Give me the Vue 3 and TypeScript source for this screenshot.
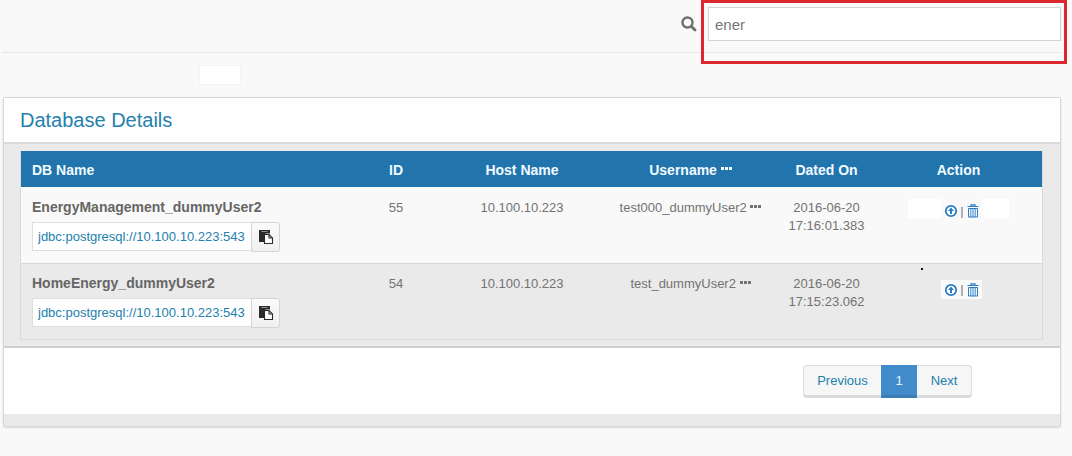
<script setup lang="ts">
import { ref } from 'vue'

interface Database {
  id: number
  name: string
  url: string
  host: string
  user: string
  date: string
  time: string
}

const query = ref('ener')

const databases: Database[] = [
  {
    id: 55,
    name: 'EnergyManagement_dummyUser2',
    url: 'jdbc:postgresql://10.100.10.223:543',
    host: '10.100.10.223',
    user: 'test000_dummyUser2',
    date: '2016-06-20',
    time: '17:16:01.383',
  },
  {
    id: 54,
    name: 'HomeEnergy_dummyUser2',
    url: 'jdbc:postgresql://10.100.10.223:543',
    host: '10.100.10.223',
    user: 'test_dummyUser2',
    date: '2016-06-20',
    time: '17:15:23.062',
  },
]
</script>

<template>
  <main class="page">
    <header class="topbar">
      <label class="search-label" for="search" aria-label="Search">
        <svg width="16" height="16" viewBox="0 0 16 16">
          <circle cx="6.5" cy="6.5" r="5" fill="none" stroke="#6f6f6f" stroke-width="2.4" />
          <path d="M10.2 10.2L14 14" stroke="#6f6f6f" stroke-width="2.8" stroke-linecap="round" />
        </svg>
      </label>
      <div class="search-field">
        <input id="search" v-model="query" type="text" class="search-input" />
      </div>
    </header>

    <div class="strip"><span class="blank"></span></div>

    <section class="panel">
      <h1 class="title">Database Details</h1>
      <div class="body">
        <table class="grid">
          <colgroup>
            <col />
            <col class="c-id" />
            <col class="c-host" />
            <col class="c-user" />
            <col class="c-date" />
            <col class="c-action" />
          </colgroup>
          <thead>
            <tr>
              <th class="left">DB Name</th>
              <th>ID</th>
              <th>Host Name</th>
              <th>
                Username
                <svg class="dots" width="12" height="11" viewBox="0 0 12 11" fill="currentColor">
                  <path d="M0 3h3v3H0zM4 3h3v3H4zM8 3h3v3H8z" />
                </svg>
              </th>
              <th>Dated On</th>
              <th>Action</th>
            </tr>
          </thead>
          <tbody>
            <tr v-for="db in databases" :key="db.id">
              <td class="left">
                <div class="name">{{ db.name }}</div>
                <div class="copy">
                  <input class="url" type="text" readonly :value="db.url" :aria-label="'URL of ' + db.name" />
                  <button class="copy-btn" type="button" aria-label="Copy URL">
                    <svg width="16" height="16" viewBox="0 0 16 16">
                      <path d="M1 1h11v3.5H7.5V13H1z" fill="#2b2b2b" />
                      <path d="M3.5 2.5h6" stroke="#8f8f8f" stroke-width="1" />
                      <path d="M6.5 5.5h4.5l3.5 3.5v5.5h-8z" fill="#fff" stroke="#2b2b2b" stroke-width="1.1" />
                      <path d="M11 5.5v3.5h3.5" fill="none" stroke="#2b2b2b" stroke-width="1.1" />
                    </svg>
                  </button>
                </div>
              </td>
              <td>{{ db.id }}</td>
              <td>{{ db.host }}</td>
              <td>
                {{ db.user }}
                <svg class="dots" width="12" height="10" viewBox="0 0 12 10" fill="currentColor">
                  <path d="M0 3h3v3H0zM4 3h3v3H4zM8 3h3v3H8z" />
                </svg>
              </td>
              <td>{{ db.date }}<br />{{ db.time }}</td>
              <td class="action-cell">
                <div class="actions">
                  <div class="tools">
                    <button class="icon-btn" type="button" aria-label="Upload">
                      <svg width="14" height="14" viewBox="0 0 14 14">
                        <circle cx="7" cy="7" r="5.2" fill="#fff" stroke="#2a7cc4" stroke-width="1.8" />
                        <path d="M7 3.6L10 7H8v3H6V7H4z" fill="#2a7cc4" />
                      </svg>
                    </button>
                    <span class="sep"></span>
                    <button class="icon-btn" type="button" aria-label="Delete">
                      <svg width="12" height="14" viewBox="0 0 12 14" fill="none" stroke="#2a7cc4">
                        <path d="M4 2V.8h4V2M.5 2.5h11" stroke-width="1.2" />
                        <path d="M1.5 4.5h9v8.5h-9z" />
                        <path d="M3.8 4.5V13M6 4.5V13M8.2 4.5V13" stroke-width=".9" />
                      </svg>
                    </button>
                  </div>
                </div>
              </td>
            </tr>
          </tbody>
        </table>
      </div>
      <footer class="footer">
        <nav class="pager" aria-label="Pages">
          <a href="#previous" class="previous">Previous</a>
          <a href="#1" class="current" aria-current="page">1</a>
          <a href="#next" class="next">Next</a>
        </nav>
      </footer>
    </section>
  </main>
</template>

<style>
body {
  background: #f9f9f9;
}
</style>

<style scoped>
.page {
  min-height: 100vh;
  box-sizing: border-box;
  background: #f9f9f9;
  font: 13px/18px "Liberation Sans", Arial, sans-serif;
  color: #737373;
}
.page * {
  box-sizing: border-box;
}
svg {
  display: block;
}
button {
  font: inherit;
  cursor: pointer;
}
.topbar {
  display: flex;
  justify-content: flex-end;
  margin: 0 11px 0 2px;
  padding-top: 7px;
  height: 53px;
  border-bottom: 1px solid #e8e8e8;
}
.search-label {
  margin: 9px 11px 0 0;
}
.search-field {
  position: relative;
  width: calc(100% / 3);
  min-width: 200px;
  height: 34px;
}
/* Highlight frame around the search field */
.search-field::after {
  content: "";
  position: absolute;
  inset: -7px -6px -23px -7px;
  border: 3px solid #dc2630;
  pointer-events: none;
}
.search-input {
  width: 100%;
  height: 34px;
  padding: 0 6px;
  border: 1px solid #d2d4d4;
  background: #fff;
  color: #777;
  font: 15px "Liberation Sans", Arial, sans-serif;
  outline: none;
}
.strip {
  height: 44px;
  padding: 12px 0 0 199px;
}
.blank {
  display: block;
  width: 42px;
  height: 20px;
  background: #fff;
  border: 1px solid #f4f4f4;
}
.panel {
  margin: 0 11px 0 3px;
  padding-bottom: 12px;
  background: #eaeaea;
  border: 1px solid #d6d6d6;
  border-radius: 2px;
  box-shadow: 0 1px 2px rgba(0, 0, 0, 0.12);
}
.title {
  margin: 0;
  padding: 0 16px;
  background: #fff;
  border-bottom: 2px solid #dadada;
  color: #2381ae;
  font-size: 20px;
  font-weight: 400;
  line-height: 44px;
}
.body {
  padding: 7px 17px 6px 16px;
}
.grid {
  width: 100%;
  table-layout: fixed;
  border-collapse: separate;
  border-spacing: 0;
  border: 1px solid #dadada;
  border-top: 0;
}
.c-id {
  width: 88px;
}
.c-host {
  width: 164px;
}
.c-user {
  width: 174px;
}
.c-date {
  width: 97px;
}
.c-action {
  width: 167px;
}
th {
  height: 36px;
  padding: 1px 0 0;
  background: #2274ad;
  color: #f0fbff;
  font-size: 14px;
  font-weight: 700;
  text-align: center;
}
td {
  height: 76px;
  padding: 12px 0 0;
  background: #f9f9f9;
  text-align: center;
  vertical-align: top;
}
tr:nth-child(even) td {
  background: #eaeaea;
  border-top: 1px solid #d8d8d8;
  padding-top: 11px;
}
.left {
  padding-left: 11px;
  text-align: left;
}
.dots {
  display: inline-block;
}
.name {
  color: #666;
  font-size: 14px;
  font-weight: 700;
  line-height: 16px;
}
.copy {
  display: flex;
  margin-top: 7px;
}
.url {
  width: 219px;
  height: 29px;
  padding: 0 0 0 5px;
  border: 1px solid #dedede;
  border-right: 0;
  background: #fff;
  color: #2381ae;
  font: 13px "Liberation Sans", Arial, sans-serif;
  outline: none;
}
.copy-btn {
  display: flex;
  align-items: center;
  justify-content: center;
  width: 29px;
  height: 30px;
  padding: 0;
  background: linear-gradient(#fafafa, #f0f0f0);
  border: 1px solid #d4d4d4;
  border-radius: 0 3px 3px 0;
}
.actions {
  display: flex;
  justify-content: center;
  width: 101px;
  margin: 0 auto;
  padding-left: 6px;
  background: #fff;
}
.tools {
  display: flex;
  align-items: center;
  gap: 2px;
  height: 19px;
  padding: 5px 3px 0 3px;
  background: #f9f9f9;
}
.sep {
  width: 2px;
  height: 11px;
  margin: 2px 2px 0 1px;
  background: #b0b0b0;
}
.icon-btn {
  padding: 0;
  border: 0;
  background: none;
}
tr:nth-child(even) .action-cell {
  padding-top: 16px;
}
tr:nth-child(even) .actions {
  position: relative;
  background: none;
}
tr:nth-child(even) .tools {
  padding-top: 0;
}
/* Small marker above the tools of shaded rows */
tr:nth-child(even) .actions::before {
  content: "";
  position: absolute;
  top: -12px;
  left: 13px;
  width: 2px;
  height: 2px;
  background: #111;
}
.footer {
  display: flex;
  justify-content: flex-end;
  padding: 17px 88px 16px 0;
  background: #fff;
  border-top: 2px solid #cfcfcf;
}
.pager {
  display: flex;
  height: 33px;
  border-radius: 4px;
  line-height: 30px;
  text-align: center;
}
.pager a {
  background: #f6f6f6;
  border: 1px solid #dcdcdc;
  border-bottom: 3px solid #d8dadc;
  color: #2381ae;
  text-decoration: none;
}
.pager .previous {
  width: 78px;
  border-right: 0;
  border-radius: 4px 0 0 4px;
}
.pager .next {
  width: 55px;
  border-left: 0;
  border-radius: 0 4px 4px 0;
}
.pager .current {
  width: 36px;
  background: #428bca;
  border-color: #428bca;
  border-bottom-color: #3a7cb6;
  color: #e8f6ff;
}
</style>
